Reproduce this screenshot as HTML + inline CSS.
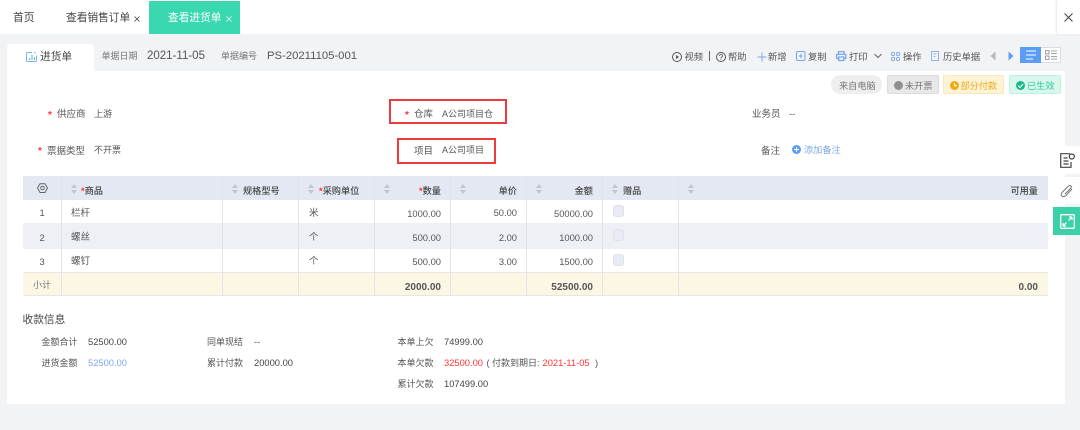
<!DOCTYPE html>
<html><head><meta charset="utf-8"><style>
*{box-sizing:border-box}
html,body{margin:0;padding:0}
body{width:1080px;height:430px;overflow:hidden;background:#f2f3f5;position:relative;font-family:"Liberation Sans","Noto Sans CJK SC",sans-serif;font-size:9.35px;color:#555}
#w{position:absolute;left:0;top:0;width:1080px;height:430px;filter:blur(.35px)}
.a,.t{position:absolute}
.t{white-space:nowrap;line-height:14px;height:14px;margin-top:1px}
.r{text-align:right}
.s{color:#f33;font-weight:bold}
.box{position:absolute;border:2px solid #ee3b3b}
.h{position:absolute;left:23px;width:1025px;top:176px;height:24px;background:#e4e8f3}
.v{position:absolute;width:1px;top:176px;height:120px;background:#e2e3e6}
.sort{position:absolute;top:184px;width:6px;height:10px}
.b{font-weight:500;color:#444;font-size:9.2px}
.n{font-weight:bold;color:#555;font-size:10px}
.l{font-size:9.5px}
.m{font-size:9px}
.k{font-size:9.3px;top:49px}
.g{font-size:9.2px;top:78px}
.cb{position:absolute;left:613px;width:11px;height:12px;border-radius:3px;background:#e8ebf3;border:1px solid #dfe2ea}
svg{position:absolute;overflow:visible}
</style></head><body><div id="w">
<div class="a" style="left:0;top:0;width:1080px;height:34px;background:#fff"></div>
<div class="a" style="left:149px;top:1px;width:91px;height:33px;background:#3ad8b1"></div>
<div class="a" style="left:1057px;top:0;width:23px;height:34px;background:#fff;box-shadow:-1px 0 2px #e6e6e6"></div>
<div class="t" style="left:13px;top:10px;font-size:10.7px;color:#444">首页</div>
<div class="t" style="left:66px;top:10px;font-size:10.7px;color:#444">查看销售订单</div>
<svg style="left:134px;top:16px" width="6" height="6"><path d="M.5 .5L5.500 5.500M5.500 .5L.5 5.500" stroke="#444" stroke-width=".8"/></svg>
<div class="t" style="left:168px;top:10px;font-size:10.7px;color:#fff">查看进货单</div>
<svg style="left:226px;top:16px" width="6" height="6"><path d="M.5 .5L5.500 5.500M5.500 .5L.5 5.500" stroke="#fff" stroke-width=".8"/></svg>
<svg style="left:1064px;top:13px" width="9" height="9"><path d="M.5 .5L8.500 8.500M8.500 .5L.5 8.500" stroke="#444"/></svg>

<div class="a" style="left:7px;top:44px;width:87px;height:28px;background:#fff;border-radius:4px 4px 0 0"></div>
<div class="a" style="left:7px;top:71px;width:1058px;height:333px;background:#fff"></div>
<svg style="left:26px;top:51px" width="11" height="11" fill="none" stroke="#7fb2f5"><path d="M6 1.500H1.500Q.5 1.500 .5 2.500V9.500Q.5 10.500 1.500 10.500H9Q10.500 10.500 10.500 9.500V4.500"/><path d="M3.500 9V7M6 9V4M8.500 9V6" stroke-width="1.200"/><circle cx="9" cy="1.500" r=".8" fill="#7fb2f5" stroke="none"/></svg>
<div class="t" style="left:40px;top:49px;font-size:10.7px;color:#444">进货单</div>
<div class="t m" style="left:101.500px;top:48px;color:#777">单据日期</div>
<div class="t" style="left:147px;top:48px;font-size:11.5px;color:#555">2021-11-05</div>
<div class="t m" style="left:221px;top:48px;color:#777">单据编号</div>
<div class="t" style="left:267px;top:48px;font-size:11.3px;color:#555">PS-20211105-001</div>

<svg style="left:672px;top:52px" width="10" height="10" fill="none" stroke="#555"><circle cx="5" cy="5" r="4.500"/><path d="M4 3L7 5L4 7Z" fill="#555" stroke="none"/></svg>
<div class="t k" style="left:684.500px">视频</div>
<div class="a" style="left:709px;top:51px;width:1px;height:10px;background:#666"></div>
<svg style="left:716px;top:52px" width="10" height="10" fill="none" stroke="#555"><circle cx="5" cy="5" r="4.500"/><path d="M3.500 4Q3.500 2.500 5 2.500T6.500 4Q6.500 5 5 5.500V6.500M5 7.200V8" stroke-width=".8"/></svg>
<div class="t k" style="left:728px">帮助</div>
<svg style="left:757px;top:52px" width="10" height="10"><path d="M5 .5V9.500M.5 5H9.500" stroke="#7fa8e8"/></svg>
<div class="t k" style="left:768px">新增</div>
<svg style="left:796px;top:51px" width="10" height="10" fill="none" stroke="#6fa5ee"><rect x=".5" y=".5" width="8.500" height="9" rx="1.500"/><path d="M4.750 3V7M2.750 5H6.750"/></svg>
<div class="t k" style="left:808px">复制</div>
<svg style="left:836px;top:50.500px" width="11" height="10" fill="none" stroke="#6fa5ee" stroke-width="1.200"><path d="M2.500 3V.7H8V3M2.500 7.500H.7V3.300H9.800V7.500H8"/><rect x="2.700" y="6" width="5.200" height="3.500"/></svg>
<div class="t k" style="left:849px">打印</div>
<svg style="left:874px;top:53px" width="8" height="6" fill="none"><path d="M.5 1L4 4.500L7.500 1" stroke="#666"/></svg>
<svg style="left:891px;top:52px" width="10" height="9" fill="none" stroke="#83aef0"><rect x=".5" y=".5" width="3" height="3" rx="1"/><rect x="5.500" y=".5" width="3" height="3" rx="1"/><rect x=".5" y="5.500" width="3" height="3" rx="1"/><rect x="5.500" y="5.500" width="3" height="3" rx="1"/></svg>
<div class="t k" style="left:903px">操作</div>
<svg style="left:931px;top:51px" width="9" height="10" fill="none" stroke="#8eb4ee"><path d="M.5 .5H7.500V9.500H.5Z"/><path d="M2.500 3H5.500M2.500 5.500H4.500"/></svg>
<div class="t k" style="left:943px">历史单据</div>
<svg style="left:990px;top:51px" width="6" height="10"><path d="M5.500 .5V9.500L.5 5Z" fill="#b5b8bd"/></svg>
<svg style="left:1008px;top:51px" width="6" height="10"><path d="M.5 .5V9.500L5.500 5Z" fill="#5b9df5"/></svg>
<div class="a" style="left:1020px;top:47px;width:41px;height:16px;background:#fff;border:1px solid #d9dce2"></div>
<div class="a" style="left:1020px;top:47px;width:21px;height:16px;background:#5b9df5"></div>
<svg style="left:1026px;top:50px" width="10" height="10"><path d="M0 1H10M0 5H10M0 9H7" stroke="#fff"/></svg>
<svg style="left:1045px;top:50px" width="12" height="10" fill="none" stroke="#888" stroke-width=".8"><rect x=".5" y=".5" width="3.500" height="3.500"/><rect x=".5" y="6" width="3.500" height="3.500"/><path d="M6 1H12M6 3.500H12M6 6.500H12M6 9H12"/></svg>

<div class="a" style="left:831px;top:75px;width:51px;height:19px;border-radius:10px;background:#eeeeee"></div>
<div class="t g" style="left:839px;color:#777">来自电脑</div>
<div class="a" style="left:887px;top:75px;width:52px;height:19px;border-radius:2px;background:#e8e8e8;border:1px solid #dcdcdc"></div>
<div class="a" style="left:894px;top:81px;width:9px;height:9px;border-radius:50%;background:#909090"></div>
<div class="t g" style="left:905px;color:#777">未开票</div>
<div class="a" style="left:943px;top:75px;width:61px;height:19px;border-radius:2px;background:#fdf3d7;border:1px solid #fbe8b8"></div>
<div class="a" style="left:950px;top:81px;width:9px;height:9px;border-radius:50%;background:#f0ab0f"></div>
<svg style="left:950px;top:81px" width="9" height="9"><path d="M4.500 2V4.800H7" fill="none" stroke="#fff"/></svg>
<div class="t g" style="left:960.500px;color:#eeaa1a">部分付款</div>
<div class="a" style="left:1009px;top:75px;width:52px;height:19px;border-radius:2px;background:#d8f8ec;border:1px solid #c1f0de"></div>
<div class="a" style="left:1016px;top:81px;width:9px;height:9px;border-radius:50%;background:#16b98a"></div>
<svg style="left:1016px;top:81px" width="9" height="9"><path d="M2 4.500L4 6.500L7 3" fill="none" stroke="#fff"/></svg>
<div class="t g" style="left:1027px;color:#2ec9a0">已生效</div>

<div class="t s" style="left:48px;top:108px;font-size:10px">*</div>
<div class="t l" style="left:57px;top:107px">供应商</div>
<div class="t m" style="left:94px;top:106px">上游</div>
<div class="t s" style="left:38px;top:144px;font-size:10px">*</div>
<div class="t l" style="left:47px;top:144px">票据类型</div>
<div class="t m" style="left:94px;top:142px">不开票</div>
<div class="box" style="left:389px;top:99px;width:118px;height:25px"></div>
<div class="t s" style="left:405px;top:108px;font-size:10px">*</div>
<div class="t l" style="left:414px;top:107px">仓库</div>
<div class="t m" style="left:442px;top:106px">A公司项目仓</div>
<div class="box" style="left:397px;top:138px;width:99px;height:26px"></div>
<div class="t l" style="left:414px;top:144px">项目</div>
<div class="t m" style="left:442px;top:142px">A公司项目</div>
<div class="t l" style="left:752px;top:107px">业务员</div>
<div class="t l" style="left:789px;top:107px">--</div>
<div class="t l" style="left:761px;top:144px">备注</div>
<div class="a" style="left:792px;top:145px;width:9px;height:9px;border-radius:50%;background:#5b9df5"></div>
<svg style="left:792px;top:145px" width="9" height="9"><path d="M4.500 2V7M2 4.500H7" stroke="#fff"/></svg>
<div class="t" style="left:804px;top:142px;font-size:9.200px;color:#7fa8e8">添加备注</div>

<div class="h"></div>
<div class="a" style="left:23px;top:200px;width:1025px;height:24px;background:#fff"></div>
<div class="a" style="left:23px;top:223px;width:1025px;height:26px;background:#eff0f6"></div>
<div class="a" style="left:23px;top:272px;width:1025px;height:24px;background:#fcf6e4;border-top:1px solid #e8e6de;border-bottom:1px solid #e8e6de"></div>
<div class="v" style="left:61px"></div><div class="v" style="left:222px"></div><div class="v" style="left:298px"></div><div class="v" style="left:374px"></div><div class="v" style="left:450px"></div><div class="v" style="left:526px"></div><div class="v" style="left:602px"></div><div class="v" style="left:678px"></div>
<svg style="left:37px;top:182.500px" width="11" height="10" fill="none" stroke="#666"><path d="M3 .7H8L10.500 5L8 9.500H3L.5 5Z" stroke-linejoin="round"/><circle cx="5.500" cy="5" r="1.800"/></svg>

<svg class="sort" style="left:71px"><path d="M3 0L6 4H0ZM0 6H6L3 10Z" fill="#c3c6cc"/></svg>
<svg class="sort" style="left:232px"><path d="M3 0L6 4H0ZM0 6H6L3 10Z" fill="#c3c6cc"/></svg>
<svg class="sort" style="left:308px"><path d="M3 0L6 4H0ZM0 6H6L3 10Z" fill="#c3c6cc"/></svg>
<svg class="sort" style="left:384px"><path d="M3 0L6 4H0ZM0 6H6L3 10Z" fill="#c3c6cc"/></svg>
<svg class="sort" style="left:460px"><path d="M3 0L6 4H0ZM0 6H6L3 10Z" fill="#c3c6cc"/></svg>
<svg class="sort" style="left:536px"><path d="M3 0L6 4H0ZM0 6H6L3 10Z" fill="#c3c6cc"/></svg>
<svg class="sort" style="left:612px"><path d="M3 0L6 4H0ZM0 6H6L3 10Z" fill="#c3c6cc"/></svg>
<svg class="sort" style="left:688px"><path d="M3 0L6 4H0ZM0 6H6L3 10Z" fill="#c3c6cc"/></svg>

<div class="t b" style="left:81px;top:183px"><span class="s">*</span>商品</div>
<div class="t b" style="left:243px;top:183px">规格型号</div>
<div class="t b" style="left:319px;top:183px"><span class="s">*</span>采购单位</div>
<div class="t b r" style="left:400px;width:41px;top:183px"><span class="s">*</span>数量</div>
<div class="t b r" style="left:480px;width:37px;top:183px">单价</div>
<div class="t b r" style="left:556px;width:37px;top:183px">金额</div>
<div class="t b" style="left:623px;top:183px">赠品</div>
<div class="t b r" style="left:980px;width:58px;top:183px">可用量</div>

<div class="t" style="left:39.500px;top:205px">1</div><div class="t" style="left:39.500px;top:230px">2</div><div class="t" style="left:39.500px;top:254px">3</div>
<div class="t l" style="left:71px;top:206px">栏杆</div>
<div class="t l" style="left:71px;top:230px">螺丝</div>
<div class="t l" style="left:71px;top:254px">螺钉</div>
<div class="t l" style="left:309px;top:206px">米</div>
<div class="t l" style="left:309px;top:230px">个</div>
<div class="t l" style="left:309px;top:254px">个</div>
<div class="t r" style="left:380px;width:61px;top:206px">1000.00</div>
<div class="t r" style="left:380px;width:61px;top:230px">500.00</div>
<div class="t r" style="left:380px;width:61px;top:254px">500.00</div>
<div class="t r" style="left:456px;width:61px;top:205px">50.00</div>
<div class="t r" style="left:456px;width:61px;top:230px">2.00</div>
<div class="t r" style="left:456px;width:61px;top:254px">3.00</div>
<div class="t r" style="left:532px;width:61px;top:206px">50000.00</div>
<div class="t r" style="left:532px;width:61px;top:230px">1000.00</div>
<div class="t r" style="left:532px;width:61px;top:254px">1500.00</div>
<div class="cb" style="top:205px"></div><div class="cb" style="top:229px"></div><div class="cb" style="top:254px"></div>
<div class="t m" style="left:33px;top:277px;color:#777">小计</div>
<div class="t n r" style="left:380px;width:61px;top:280px">2000.00</div>
<div class="t n r" style="left:532px;width:61px;top:280px">52500.00</div>
<div class="t n r" style="left:980px;width:58px;top:280px">0.00</div>

<div class="a" style="left:1053px;top:146px;width:27px;height:28px;background:#fff"></div>
<div class="a" style="left:1053px;top:177px;width:27px;height:27px;background:#fff"></div>
<div class="a" style="left:1053px;top:207px;width:27px;height:28px;background:#3bd0a8"></div>
<svg style="left:1060px;top:153px" width="15" height="15" fill="none" stroke="#444" stroke-width="1.200"><path d="M10 .7H.7V14.300H11V9"/><path d="M3.500 5H7.500M3.500 8H8.500M3.500 11H8.500"/><circle cx="11.800" cy="3.500" r="2.500"/></svg>
<svg style="left:1060px;top:184px" width="14" height="14" fill="none" stroke="#777"><path d="M12 5L6 11.500Q4 13.300 2 12T2.500 8L8.500 2Q10 1 11 2T10.500 4.500L5 10"/></svg>
<svg style="left:1060px;top:214px" width="15" height="15" fill="none" stroke="#fff"><rect x=".7" y=".7" width="13.600" height="13.600" rx="1" stroke-width="1.300"/><path d="M8.500 6.500L12 3M12 3H9M12 3V6M6.500 8.500L3 12M3 12H6M3 12V9" stroke-width="1.200"/></svg>

<div class="t" style="left:22.500px;top:312px;font-size:10.700px;color:#444">收款信息</div>
<div class="t m" style="left:41.500px;top:334px">金额合计</div>
<div class="t" style="left:88px;top:334px;color:#444">52500.00</div>
<div class="t m" style="left:41.500px;top:355px">进货金额</div>
<div class="t" style="left:88px;top:355px;color:#7fa8f0">52500.00</div>
<div class="t m" style="left:207px;top:334px">同单现结</div>
<div class="t" style="left:254px;top:334px">--</div>
<div class="t m" style="left:207px;top:355px">累计付款</div>
<div class="t" style="left:254px;top:355px;color:#444">20000.00</div>
<div class="t m" style="left:397.500px;top:334px">本单上欠</div>
<div class="t" style="left:444px;top:334px;color:#444">74999.00</div>
<div class="t m" style="left:397.500px;top:355px">本单欠款</div>
<div class="t" style="left:444px;top:355px;color:#f33">32500.00</div>
<div class="t" style="left:486.500px;top:355px;font-size:9px">( 付款到期日:</div>
<div class="t" style="left:542.500px;top:355px;color:#f33">2021-11-05</div>
<div class="t" style="left:595px;top:355px">)</div>
<div class="t m" style="left:397.500px;top:376px">累计欠款</div>
<div class="t" style="left:444px;top:376px;color:#444">107499.00</div>
</div></body></html>
